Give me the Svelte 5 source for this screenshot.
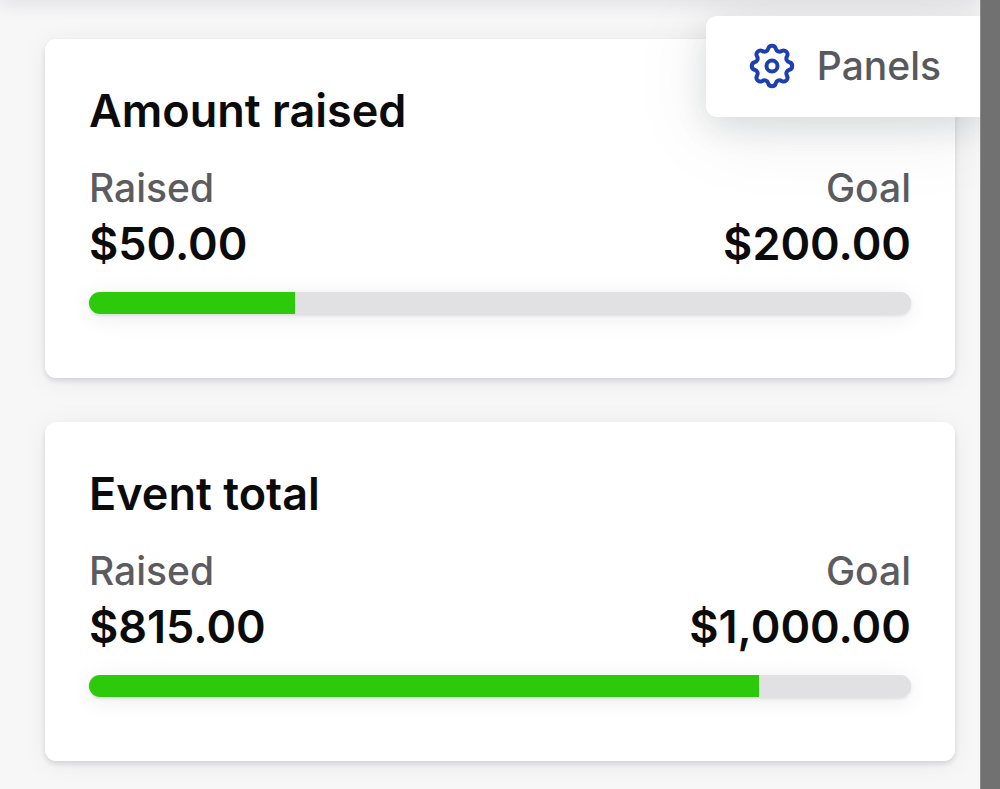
<script>
  const funds = [
    { id: 'amount', title: 'Amount raised', raised: 50, goal: 200 },
    { id: 'event', title: 'Event total', raised: 815, goal: 1000 }
  ];

  const money = new Intl.NumberFormat('en-US', { style: 'currency', currency: 'USD' });

  // Outline of the eight-tooth cog: a convex arc for each tooth, a concave one for each valley.
  function cog(radius, halfAngle, bend) {
    const at = (deg) => {
      const a = (deg * Math.PI) / 180;
      return `${(24 + radius * Math.cos(a)).toFixed(2)} ${(24 + radius * Math.sin(a)).toFixed(2)}`;
    };
    let d = `M${at(-halfAngle)}`;
    for (let i = 0; i < 8; i++) {
      d += `A${bend} ${bend} 0 0 1 ${at(i * 45 + halfAngle)}`;
      d += `A${bend} ${bend} 0 0 0 ${at((i + 1) * 45 - halfAngle)}`;
    }
    return d + 'Z';
  }
  const cogPath = cog(17.8, 12.2, 3.9);
</script>

<div class="shell">
  <div class="page">
    <header class="topbar"></header>
    <main class="cards">
      {#each funds as fund (fund.id)}
        <section class="card" aria-labelledby="{fund.id}-title">
          <h2 id="{fund.id}-title">{fund.title}</h2>
          <dl>
            <div>
              <dt>Raised</dt>
              <dd>{money.format(fund.raised)}</dd>
            </div>
            <div class="goal">
              <dt>Goal</dt>
              <dd>{money.format(fund.goal)}</dd>
            </div>
          </dl>
          <progress aria-labelledby="{fund.id}-title" max={fund.goal} value={fund.raised}></progress>
        </section>
      {/each}
    </main>
    <button class="panels" type="button">
      <svg viewBox="0 0 48 48" aria-hidden="true">
        <path d={cogPath} />
        <circle cx="24" cy="24" r="5.5" />
      </svg>
      Panels
    </button>
  </div>
  <div class="gutter"></div>
</div>

<style>
  :global(body) {
    margin: 0;
  }
  .shell {
    display: flex;
    min-height: 100vh;
    font-family: Inter, 'Liberation Sans', sans-serif;
    color: #0b0b0c;
  }
  .page {
    position: relative;
    flex: 1;
    min-width: 0;
    overflow: hidden;
    background: #f7f7f8;
  }
  .gutter {
    width: 20px;
    box-sizing: border-box;
    border-left: 1px solid #8a8a8a;
    background: #717171;
  }
  .topbar {
    position: absolute;
    left: 0;
    right: 0;
    bottom: 100%;
    height: 60px;
    box-shadow: 0 4px 20px rgba(20, 20, 40, 0.1);
  }
  .cards {
    display: grid;
    gap: 44px;
    padding: 39px 25px 28px 45px;
  }
  .card {
    padding: 45px 44px 64px;
    border-radius: 11px;
    background: #fff;
    box-shadow:
      0 3px 5px rgba(20, 20, 40, 0.12),
      0 3px 28px rgba(20, 20, 40, 0.06);
  }
  h2 {
    margin: 0 0 22px;
    font-size: 45px;
    line-height: 54px;
    font-weight: 600;
  }
  dl {
    display: flex;
    justify-content: space-between;
    margin: 0 0 20px;
    line-height: 56px;
  }
  .goal {
    text-align: right;
  }
  dt {
    font-size: 39px;
    font-weight: 500;
    color: #5b5b60;
  }
  dd {
    margin: 0;
    font-size: 45px;
    font-weight: 600;
  }
  progress {
    display: block;
    width: 100%;
    height: 22px;
    appearance: none;
    border: 0;
    border-radius: 11px;
    overflow: hidden;
    background: #e1e1e4;
    box-shadow:
      0 2px 3px rgba(20, 20, 40, 0.1),
      0 4px 24px rgba(20, 20, 40, 0.08);
  }
  progress::-webkit-progress-bar {
    background: #e1e1e4;
  }
  progress::-webkit-progress-value {
    background: #2dc90b;
  }
  progress::-moz-progress-bar {
    background: #2dc90b;
  }
  .panels {
    position: absolute;
    top: 16px;
    right: 0;
    display: flex;
    align-items: center;
    gap: 21px;
    padding: 26px 39px 27px 42px;
    border: 0;
    border-radius: 11px 0 0 11px;
    background: #fff;
    box-shadow:
      0 10px 32px rgba(20, 30, 30, 0.12),
      0 12px 84px rgba(20, 20, 40, 0.08);
    font: 500 39px/48px Inter, 'Liberation Sans', sans-serif;
    color: #58595c;
    cursor: pointer;
  }
  .panels svg {
    width: 48px;
    height: 48px;
    fill: none;
    stroke: #1e40af;
    stroke-width: 4;
    stroke-linejoin: round;
  }
</style>
